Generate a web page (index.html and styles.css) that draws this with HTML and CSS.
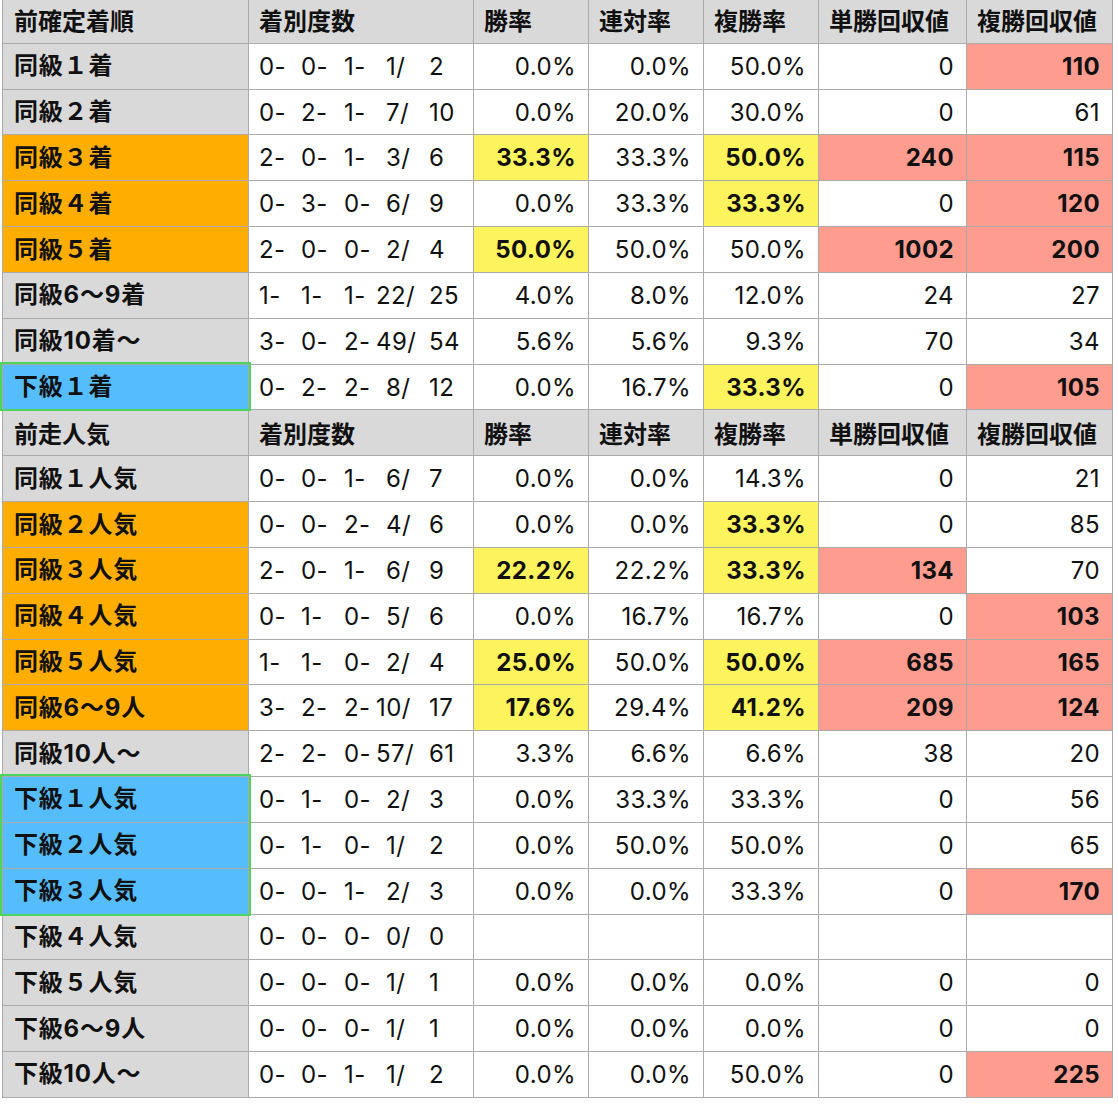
FILE: index.html
```html
<!DOCTYPE html>
<html lang="ja">
<head>
<meta charset="utf-8">
<title>前走成績</title>
<link rel="stylesheet" href="styles.css">
</head>
<body>
<table class="stats">
<colgroup>
<col class="c-label"><col class="c-rec"><col class="c-pct"><col class="c-pct"><col class="c-pct"><col class="c-ret1"><col class="c-ret2">
</colgroup>
<tbody>
<tr class="head"><td>前確定着順</td><td>着別度数</td><td>勝率</td><td>連対率</td><td>複勝率</td><td>単勝回収値</td><td>複勝回収値</td></tr>
<tr><td class="lbl grey">同級１着</td><td class="rec"><span class="f1">0-</span><span class="f2">0-</span><span class="f3">1-</span><span class="f4">1/</span><span class="f5">2</span></td><td class="num">0.0%</td><td class="num">0.0%</td><td class="num">50.0%</td><td class="num">0</td><td class="num hot">110</td></tr>
<tr><td class="lbl grey">同級２着</td><td class="rec"><span class="f1">0-</span><span class="f2">2-</span><span class="f3">1-</span><span class="f4">7/</span><span class="f5">10</span></td><td class="num">0.0%</td><td class="num">20.0%</td><td class="num">30.0%</td><td class="num">0</td><td class="num">61</td></tr>
<tr><td class="lbl orange">同級３着</td><td class="rec"><span class="f1">2-</span><span class="f2">0-</span><span class="f3">1-</span><span class="f4">3/</span><span class="f5">6</span></td><td class="num good">33.3%</td><td class="num">33.3%</td><td class="num good">50.0%</td><td class="num hot">240</td><td class="num hot">115</td></tr>
<tr><td class="lbl orange">同級４着</td><td class="rec"><span class="f1">0-</span><span class="f2">3-</span><span class="f3">0-</span><span class="f4">6/</span><span class="f5">9</span></td><td class="num">0.0%</td><td class="num">33.3%</td><td class="num good">33.3%</td><td class="num">0</td><td class="num hot">120</td></tr>
<tr><td class="lbl orange">同級５着</td><td class="rec"><span class="f1">2-</span><span class="f2">0-</span><span class="f3">0-</span><span class="f4">2/</span><span class="f5">4</span></td><td class="num good">50.0%</td><td class="num">50.0%</td><td class="num">50.0%</td><td class="num hot">1002</td><td class="num hot">200</td></tr>
<tr><td class="lbl grey">同級6～9着</td><td class="rec"><span class="f1">1-</span><span class="f2">1-</span><span class="f3">1-</span><span class="f4 dd">22/</span><span class="f5">25</span></td><td class="num">4.0%</td><td class="num">8.0%</td><td class="num">12.0%</td><td class="num">24</td><td class="num">27</td></tr>
<tr><td class="lbl grey">同級10着～</td><td class="rec"><span class="f1">3-</span><span class="f2">0-</span><span class="f3">2-</span><span class="f4 dd">49/</span><span class="f5">54</span></td><td class="num">5.6%</td><td class="num">5.6%</td><td class="num">9.3%</td><td class="num">70</td><td class="num">34</td></tr>
<tr><td class="lbl blue sel sel-top sel-bottom">下級１着</td><td class="rec"><span class="f1">0-</span><span class="f2">2-</span><span class="f3">2-</span><span class="f4">8/</span><span class="f5">12</span></td><td class="num">0.0%</td><td class="num">16.7%</td><td class="num good">33.3%</td><td class="num">0</td><td class="num hot">105</td></tr>
<tr class="head"><td>前走人気</td><td>着別度数</td><td>勝率</td><td>連対率</td><td>複勝率</td><td>単勝回収値</td><td>複勝回収値</td></tr>
<tr><td class="lbl grey">同級１人気</td><td class="rec"><span class="f1">0-</span><span class="f2">0-</span><span class="f3">1-</span><span class="f4">6/</span><span class="f5">7</span></td><td class="num">0.0%</td><td class="num">0.0%</td><td class="num">14.3%</td><td class="num">0</td><td class="num">21</td></tr>
<tr><td class="lbl orange">同級２人気</td><td class="rec"><span class="f1">0-</span><span class="f2">0-</span><span class="f3">2-</span><span class="f4">4/</span><span class="f5">6</span></td><td class="num">0.0%</td><td class="num">0.0%</td><td class="num good">33.3%</td><td class="num">0</td><td class="num">85</td></tr>
<tr><td class="lbl orange">同級３人気</td><td class="rec"><span class="f1">2-</span><span class="f2">0-</span><span class="f3">1-</span><span class="f4">6/</span><span class="f5">9</span></td><td class="num good">22.2%</td><td class="num">22.2%</td><td class="num good">33.3%</td><td class="num hot">134</td><td class="num">70</td></tr>
<tr><td class="lbl orange">同級４人気</td><td class="rec"><span class="f1">0-</span><span class="f2">1-</span><span class="f3">0-</span><span class="f4">5/</span><span class="f5">6</span></td><td class="num">0.0%</td><td class="num">16.7%</td><td class="num">16.7%</td><td class="num">0</td><td class="num hot">103</td></tr>
<tr><td class="lbl orange">同級５人気</td><td class="rec"><span class="f1">1-</span><span class="f2">1-</span><span class="f3">0-</span><span class="f4">2/</span><span class="f5">4</span></td><td class="num good">25.0%</td><td class="num">50.0%</td><td class="num good">50.0%</td><td class="num hot">685</td><td class="num hot">165</td></tr>
<tr><td class="lbl orange">同級6～9人</td><td class="rec"><span class="f1">3-</span><span class="f2">2-</span><span class="f3">2-</span><span class="f4 dd">10/</span><span class="f5">17</span></td><td class="num good">17.6%</td><td class="num">29.4%</td><td class="num good">41.2%</td><td class="num hot">209</td><td class="num hot">124</td></tr>
<tr><td class="lbl grey">同級10人～</td><td class="rec"><span class="f1">2-</span><span class="f2">2-</span><span class="f3">0-</span><span class="f4 dd">57/</span><span class="f5">61</span></td><td class="num">3.3%</td><td class="num">6.6%</td><td class="num">6.6%</td><td class="num">38</td><td class="num">20</td></tr>
<tr><td class="lbl blue sel sel-top">下級１人気</td><td class="rec"><span class="f1">0-</span><span class="f2">1-</span><span class="f3">0-</span><span class="f4">2/</span><span class="f5">3</span></td><td class="num">0.0%</td><td class="num">33.3%</td><td class="num">33.3%</td><td class="num">0</td><td class="num">56</td></tr>
<tr><td class="lbl blue sel">下級２人気</td><td class="rec"><span class="f1">0-</span><span class="f2">1-</span><span class="f3">0-</span><span class="f4">1/</span><span class="f5">2</span></td><td class="num">0.0%</td><td class="num">50.0%</td><td class="num">50.0%</td><td class="num">0</td><td class="num">65</td></tr>
<tr><td class="lbl blue sel sel-bottom">下級３人気</td><td class="rec"><span class="f1">0-</span><span class="f2">0-</span><span class="f3">1-</span><span class="f4">2/</span><span class="f5">3</span></td><td class="num">0.0%</td><td class="num">0.0%</td><td class="num">33.3%</td><td class="num">0</td><td class="num hot">170</td></tr>
<tr><td class="lbl grey">下級４人気</td><td class="rec"><span class="f1">0-</span><span class="f2">0-</span><span class="f3">0-</span><span class="f4">0/</span><span class="f5">0</span></td><td class="num"></td><td class="num"></td><td class="num"></td><td class="num"></td><td class="num"></td></tr>
<tr><td class="lbl grey">下級５人気</td><td class="rec"><span class="f1">0-</span><span class="f2">0-</span><span class="f3">0-</span><span class="f4">1/</span><span class="f5">1</span></td><td class="num">0.0%</td><td class="num">0.0%</td><td class="num">0.0%</td><td class="num">0</td><td class="num">0</td></tr>
<tr><td class="lbl grey">下級6～9人</td><td class="rec"><span class="f1">0-</span><span class="f2">0-</span><span class="f3">0-</span><span class="f4">1/</span><span class="f5">1</span></td><td class="num">0.0%</td><td class="num">0.0%</td><td class="num">0.0%</td><td class="num">0</td><td class="num">0</td></tr>
<tr><td class="lbl grey">下級10人～</td><td class="rec"><span class="f1">0-</span><span class="f2">0-</span><span class="f3">1-</span><span class="f4">1/</span><span class="f5">2</span></td><td class="num">0.0%</td><td class="num">0.0%</td><td class="num">50.0%</td><td class="num">0</td><td class="num hot">225</td></tr>
</tbody>
</table>
</body>
</html>
```
FILE: styles.css
```css
html, body {
  margin: 0;
  padding: 0;
  background: #ffffff;
}
body {
  font-family: Inter, "Noto Sans CJK JP", sans-serif;
  color: #111111;
  overflow: hidden;
}
.stats {
  border-collapse: collapse;
  table-layout: fixed;
  width: 1110px;
  margin: -3px 0 0 2px;
  font-size: 24px;
  letter-spacing: 0.4px;
}
.c-label { width: 246px; }
.c-rec { width: 225px; }
.c-pct { width: 115px; }
.c-ret1 { width: 148px; }
.c-ret2 { width: 146px; }
.stats tr { height: 45.83px; }
.stats td {
  border: 1px solid #ababab;
  padding: 1px 12px 0 10px;
  white-space: nowrap;
  vertical-align: middle;
  line-height: 1;
}
.head td {
  background: #d9d9d9;
  font-family: "Noto Sans CJK JP", sans-serif;
  font-weight: 700;
  font-size: 24px;
  letter-spacing: 0;
}
.stats .head td {
  padding: 0 0 0 10px;
}
.stats .head td:first-child { padding-left: 11px; }
.lbl {
  font-family: Inter, "Noto Sans CJK JP", sans-serif;
  font-weight: 700;
  font-size: 24px;
  letter-spacing: 0.8px;
}
.stats td.lbl { padding: 0 0 0 11px; }
.grey { background: #d9d9d9; }
.orange { background: #ffae00; }
.blue { background: #56bdfd; }

.rec span { display: inline-block; }
.f1 { width: 42px; }
.f2 { width: 43px; }
.f3 { width: 42px; }
.f4 { width: 44px; }
.f4.dd { width: 54px; margin-left: -10px; }
.f5 { width: auto; margin-left: -1px; }

.num { text-align: right; }
.stats td.num { padding-right: 12px; }
.good {
  background: #fdf35d;
  font-weight: 700;
}
.hot {
  background: #fe9c90;
  font-weight: 700;
}
.sel { position: relative; }
.sel::after {
  content: "";
  position: absolute;
  left: -3px;
  right: -3px;
  top: -1px;
  bottom: -1px;
  border-left: 2px solid #4cd45e;
  border-right: 2px solid #4cd45e;
  pointer-events: none;
}
.sel-top::after { top: -3px; border-top: 2px solid #4cd45e; }
.sel-bottom::after { bottom: -2px; border-bottom: 2px solid #4cd45e; }
```
